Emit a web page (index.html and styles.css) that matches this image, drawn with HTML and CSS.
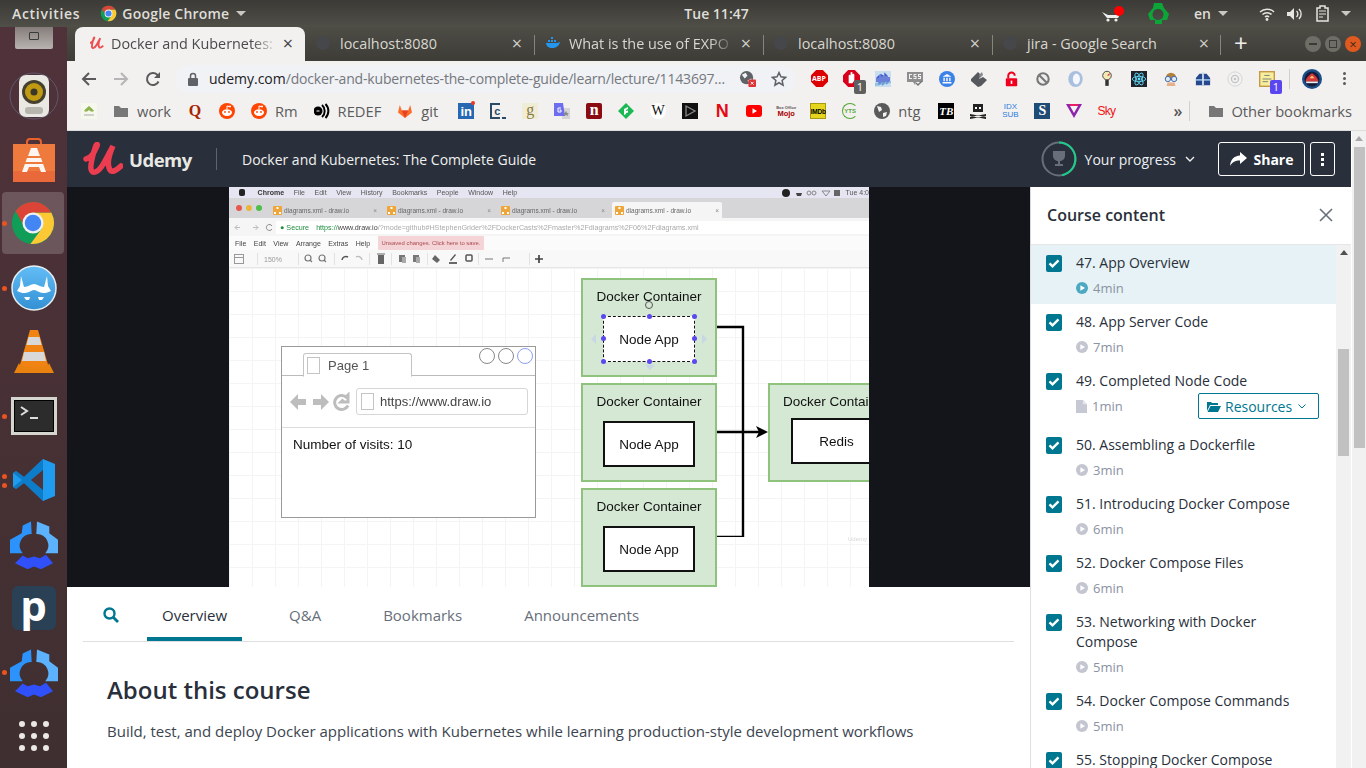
FILE: index.html
```html
<!DOCTYPE html>
<html lang="en">
<head>
    <meta charset="UTF-8">
    <title>Docker and Kubernetes: The Complete Guide | Udemy</title>
    <link rel="stylesheet" href="styles.css">
</head>
<body>
    <svg class="defs" width="0" height="0">
        <symbol id="chromeLogo" viewBox="0 0 48 48">
            <circle cx="24" cy="24" r="22" fill="#0f9d58"/>
            <path d="M43.05 13A22 22 0 0 1 21.3 45.8L33.5 29.5 24 13z" fill="#fcc934"/>
            <path d="M5.9 11.6A22 22 0 0 1 43.05 13H24L15 28z" fill="#db4437"/>
            <circle cx="24" cy="24" r="11" fill="#f1f1f1"/>
            <circle cx="24" cy="24" r="8.6" fill="#4285f4"/>
        </symbol>
        <symbol id="gearLogo" viewBox="0 0 48 48">
            <path d="M21 1l.7 12.500A11.500 11.500 0 0 0 12.700 32.700H0V19.300l11.700-6.600L12.700 5z" fill="#2b93fb"/>
            <path d="M27 1l12.300 5v6.700L48 19.300v13.400H35.300A11.500 11.500 0 0 0 26.300 13.500z" fill="#5cb2fd"/>
            <path d="M5 42.700L12.700 35l5 2.700 6.300-1.700 6 1.700 6-3.400 7 8.400-12 6-7-2.700-6.300 2.700z" fill="#2f50fb"/>
        </symbol>
        <symbol id="reddit" viewBox="0 0 16 16">
            <circle cx="8" cy="8" r="8" fill="#ff4500"/>
            <ellipse cx="8" cy="9.6" rx="5" ry="3.4" fill="#fff"/>
            <circle cx="6" cy="9" r=".9" fill="#ff4500"/>
            <circle cx="10" cy="9" r=".9" fill="#ff4500"/>
            <path d="M8 6V3l2.500.6" stroke="#fff" fill="none"/>
            <circle cx="11" cy="3.6" r="1" fill="#fff"/>
        </symbol>
        <symbol id="folder" viewBox="0 0 16 16">
            <path d="M1 3h5l2 2h7v9H1z" fill="#777"/>
        </symbol>
        <symbol id="check" viewBox="0 0 16 16">
            <path d="M3.500 8.400l3 3 6-6" fill="none" stroke="#fff" stroke-width="2.400"/>
        </symbol>
        <symbol id="playDot" viewBox="0 0 12 12">
            <circle cx="6" cy="6" r="6"/>
            <path d="M4.400 3.200L9 6 4.400 8.800z" fill="#fff"/>
        </symbol>
        <symbol id="fileIcon" viewBox="0 0 12 14">
            <path d="M0 0h7.500L12 4.500V14H0z" fill="#c6c8d4"/>
            <path d="M7.500 0v4.500H12" fill="#e4e5ec"/>
        </symbol>
        <symbol id="drawioIcon" viewBox="0 0 9 9">
            <rect width="9" height="9" rx="1" fill="#eea63a"/>
            <path d="M3.500 1h2v2h-2zM1 6h2v2H1zM6 6h2v2H6z" fill="#fff"/>
        </symbol>
    </svg>

    <header class="topbar">
        <span class="topbar-text activities">Activities</span>
        <svg class="app-logo"><use href="#chromeLogo"/></svg>
        <span class="topbar-text app-name">Google Chrome</span>
        <span class="caret"></span>
        <span class="topbar-text clock">Tue 11:47</span>
        <div class="tray">
            <svg class="tray-cart" width="26" height="18" viewBox="0 0 26 18">
                <path d="M1 7l6 3h9l2-4 2 1-3 6H6z" fill="#eee"/>
                <circle cx="7" cy="15" r="1.600" fill="#eee"/>
                <circle cx="15" cy="15" r="1.600" fill="#eee"/>
                <circle cx="18" cy="6" r="5" fill="#f00"/>
            </svg>
            <svg class="tray-recycle" width="24" height="24" viewBox="0 0 24 24">
                <path d="M8 1h8l2 5 5 6-2 6-5 0v4H9v-4H4l-2-6 5-6zM12 7a5.500 5.500 0 1 0 .01 0z" fill="#0ca537" fill-rule="evenodd"/>
            </svg>
            <span class="topbar-text lang">en</span>
            <span class="caret"></span>
            <svg class="tray-wifi" width="16" height="14" viewBox="0 0 16 14">
                <path d="M1 5a10 10 0 0 1 14 0M3.500 7.500a6.500 6.500 0 0 1 9 0M6 10a3 3 0 0 1 4 0" fill="none" stroke="#e6e5df" stroke-width="1.500"/>
                <circle cx="8" cy="12.500" r="1.400" fill="#e6e5df"/>
            </svg>
            <svg class="tray-vol" width="16" height="14" viewBox="0 0 16 14">
                <path d="M0 5h3l4-4v12l-4-4H0z" fill="#e6e5df"/>
                <path d="M9.500 4a4 4 0 0 1 0 6M12 2a7 7 0 0 1 0 10" fill="none" stroke="#e6e5df" stroke-width="1.400"/>
            </svg>
            <svg class="tray-batt" width="14" height="17" viewBox="0 0 14 17">
                <path d="M4 1h5v2h3v13H1V3h3z" fill="none" stroke="#e6e5df" stroke-width="1.500"/>
                <path d="M3 6h7M3 9h7M3 12h4" stroke="#e6e5df"/>
            </svg>
            <span class="caret"></span>
        </div>
    </header>

    <div class="desk">
        <nav class="dock">
            <div class="dock-item drive-slot">
                <div class="drive"><span></span></div>
            </div>
            <div class="dock-item">
                <svg width="50" height="48" viewBox="0 0 50 48">
                    <ellipse cx="25" cy="24" rx="24" ry="23" fill="none" stroke="#6d7ea0" stroke-width="1" opacity=".5"/>
                    <rect x="10" y="3" width="30" height="42" rx="7" fill="#e9e8e2"/>
                    <circle cx="25" cy="20" r="12" fill="#46402e"/>
                    <circle cx="25" cy="20" r="9" fill="#c29a12"/>
                    <circle cx="25" cy="20" r="3.500" fill="#3a3628"/>
                    <rect x="16" y="35" width="18" height="7" rx="3" fill="#b6b5ae"/>
                </svg>
            </div>
            <div class="dock-item">
                <svg width="44" height="44" viewBox="0 0 44 44">
                    <path d="M15 9V4a3 3 0 0 1 3-3h8a3 3 0 0 1 3 3v5" fill="none" stroke="#e8612c" stroke-width="2"/>
                    <path d="M1 6h42v38H1z" fill="#ef7a3e"/>
                    <path d="M1 33h42v11H1z" fill="#e9693a"/>
                    <path d="M19 10h6l3 8h-12zM15 20h14l5 14h-5l-2-5H17l-2 5h-5z" fill="#fff" opacity=".92"/>
                    <path d="M13 24h18v2H13z" fill="#ef7a3e"/>
                </svg>
            </div>
            <div class="dock-item running active">
                <svg width="46" height="46"><use href="#chromeLogo"/></svg>
            </div>
            <div class="dock-item running">
                <svg width="46" height="46" viewBox="0 0 46 46">
                    <defs><linearGradient id="stacheSky" x1="0" y1="0" x2="0" y2="1"><stop offset="0" stop-color="#63bdf6"/><stop offset="1" stop-color="#3290d4"/></linearGradient></defs>
                    <circle cx="23" cy="23" r="22" fill="url(#stacheSky)" stroke="#e8eef2" stroke-width="1.500"/>
                    <path d="M9 21l1-10 3 11c4 0 7-3 10-3s6 3 10 3l3-11 1 10 3 5c-4 2-8 3-12 1-2-1-3-2-5-2s-3 1-5 2c-4 2-8 1-12-1z" fill="#fff"/>
                    <path d="M13 32h6l-1 3h-3zM27 32h6l-2 3h-3z" fill="#fff"/>
                </svg>
            </div>
            <div class="dock-item">
                <svg width="42" height="46" viewBox="0 0 42 46">
                    <path d="M17 1h8l11 38H6z" fill="#f08312"/>
                    <path d="M15.500 8h11l2 8h-15zM11 23h20l2 9H9z" fill="#d8d8d8"/>
                    <path d="M6 34L1 44h40l-5-10c0 6-30 6-30 0z" fill="#e9820f"/>
                </svg>
            </div>
            <div class="dock-item running">
                <div class="term"><svg width="26" height="16" viewBox="0 0 26 16"><path d="M1 2l6 4-6 4" fill="none" stroke="#ddd" stroke-width="2"/><path d="M10 12h8v2h-8z" fill="#ddd"/></svg></div>
            </div>
            <div class="dock-item running double">
                <svg width="42" height="42" viewBox="0 0 42 42">
                    <path d="M30 0l12 5v32l-12 5L11 24 3 30l-3-2v-14l3-2 8 6z" fill="#1f9cf0"/>
                    <path d="M30 0v42L11 24 3 30 0 28l9-7-9-7 3-2 8 6z" fill="#0065a9" opacity=".55"/>
                    <path d="M30 11L18 21l12 10z" fill="#4e3338"/>
                </svg>
            </div>
            <div class="dock-item"><svg width="48" height="49"><use href="#gearLogo"/></svg></div>
            <div class="dock-item">
                <div class="pbox"><span>p</span></div>
            </div>
            <div class="dock-item running"><svg width="48" height="49"><use href="#gearLogo"/></svg></div>
            <div class="dock-item">
                <div class="apps">
                    <i></i><i></i><i></i><i></i><i></i><i></i><i></i><i></i><i></i>
                </div>
            </div>
        </nav>

        <div class="chrome">
            <div class="tabstrip">
                <div class="tab tab-active">
                    <svg class="tab-icon" viewBox="0 0 40 34"><path d="M3 17C8 16 12 9 14 4 15 1 13 2 12 6 10 13 7 22 8 27 9 33 15 30 19 24 23 18 26 11 30 4 26 13 24 23 27 28 29 31 34 28 38 24" fill="none" stroke="#ec5252" stroke-width="5"/></svg>
                    <span class="tab-title tab-fade">Docker and Kubernetes:</span>
                    <span class="tab-x">&times;</span>
                </div>
                <div class="tab">
                    <span class="tab-dot"></span>
                    <span class="tab-title">localhost:8080</span>
                    <span class="tab-x">&times;</span>
                </div>
                <div class="tab tab-sep">
                    <svg class="tab-icon" viewBox="0 0 16 16"><path d="M1 8h11c1 0 2-1 3-1-1 4-4 6-8 6-3 0-6-2-6-5z" fill="#2496ed"/><path d="M3 5h2v2H3zM6 5h2v2H6zM9 5h2v2H9zM6 2h2v2H6z" fill="#2496ed"/></svg>
                    <span class="tab-title tab-fade">What is the use of EXPO</span>
                    <span class="tab-x">&times;</span>
                </div>
                <div class="tab tab-sep">
                    <span class="tab-dot"></span>
                    <span class="tab-title">localhost:8080</span>
                    <span class="tab-x">&times;</span>
                </div>
                <div class="tab tab-sep tab-last">
                    <span class="tab-dot"></span>
                    <span class="tab-title">jira - Google Search</span>
                    <span class="tab-x">&times;</span>
                </div>
                <span class="new-tab">+</span>
                <div class="win-btns">
                    <span class="win-btn"><i class="win-min"></i></span>
                    <span class="win-btn"><i class="win-max"></i></span>
                    <span class="win-btn win-close">&times;</span>
                </div>
            </div>

            <div class="toolbar">
                <svg class="tool" width="16" height="16" viewBox="0 0 16 16"><path d="M15 8H2M8 2L2 8l6 6" fill="none" stroke="#5a5a5a" stroke-width="2"/></svg>
                <svg class="tool" width="16" height="16" viewBox="0 0 16 16"><path d="M1 8h13M8 2l6 6-6 6" fill="none" stroke="#b5b5b5" stroke-width="2"/></svg>
                <svg class="tool" width="16" height="16" viewBox="0 0 16 16"><path d="M13.500 10.500A6 6 0 1 1 12.200 3.800L14 5.600" fill="none" stroke="#5a5a5a" stroke-width="2"/><path d="M15 1v6H9z" fill="#5a5a5a"/></svg>
                <div class="omnibox">
                    <svg class="lock" width="10" height="14" viewBox="0 0 10 14"><path d="M2.500 6V4a2.500 2.500 0 0 1 5 0v2" fill="none" stroke="#5f6368" stroke-width="1.500"/><rect y="6" width="10" height="8" rx="1" fill="#5f6368"/></svg>
                    <span class="url"><b>udemy.com</b>/docker-and-kubernetes-the-complete-guide/learn/lecture/1143697&hellip;</span>
                    <svg class="omni-globe" width="17" height="17" viewBox="0 0 18 18"><circle cx="8" cy="8" r="7" fill="#5f6368"/><path d="M3 5l4-2 2 3-3 3zM9 11l4-2 1 3-3 2z" fill="#f1f3f4"/><rect x="10" y="10" width="8" height="8" rx="1" fill="#d33"/><path d="M12.500 12.500l3 3m0-3l-3 3" stroke="#fff"/></svg>
                    <svg class="omni-star" width="16" height="16" viewBox="0 0 18 18"><path d="M9 1.800l2.200 4.800 5.200.6-3.900 3.500 1.100 5.200L9 13.200l-4.600 2.700 1.100-5.200-3.900-3.500 5.200-.6z" fill="none" stroke="#5f6368" stroke-width="1.700"/></svg>
                </div>
                <div class="exts">
                    <span class="ext"><svg width="17" height="17" viewBox="0 0 18 18"><path d="M5.500 0h7L18 5.500v7L12.500 18h-7L0 12.500v-7z" fill="#d00"/></svg><em class="abp">ABP</em></span>
                    <span class="ext"><svg width="17" height="17" viewBox="0 0 18 18"><path d="M5.500 0h7L18 5.500v7L12.500 18h-7L0 12.500v-7z" fill="#d8001a"/><path d="M6 14V6a1 1 0 0 1 2 0V3a1 1 0 0 1 2 0v2a1 1 0 0 1 2 0v6l-2 3z" fill="#fff"/></svg><em class="badge grey">1</em></span>
                    <span class="ext"><svg width="16" height="16" viewBox="0 0 16 16"><rect width="16" height="16" fill="#c7dfee"/><path d="M2 11V7l2-2v8l2-1V4l2 1v8l2-2V3l2 2v7l2-2V6" fill="none" stroke="#4458cf" stroke-width="1.400"/><path d="M0 12l16-2v2l-16 3z" fill="#7bb5d8" opacity=".7"/></svg></span>
                    <span class="ext"><svg width="16" height="16" viewBox="0 0 16 16"><path d="M0 1h16v10H9l-1 3-2-3H0z" fill="#8e8e8e"/><path d="M2 3h3v1H3v3h2v1H2zM6.500 3h3v1h-2v1h2v3h-3V7h2V6h-2zM11 3h3v1h-2v1h2v3h-3V7h2V6h-2z" fill="#f2f1f0"/><path d="M9 12l2 2 4-4" fill="none" stroke="#777" stroke-width="1.500"/></svg></span>
                    <span class="ext"><svg width="16" height="16" viewBox="0 0 18 18"><circle cx="9" cy="9" r="9" fill="#3b82e8"/><path d="M9 3.500L4 6.500h10zM5 7.500h1.500v4H5zM8.200 7.500h1.600v4H8.200zM11.500 7.500H13v4h-1.500zM4 12.500h10V14H4z" fill="#fff"/></svg></span>
                    <span class="ext"><svg width="16" height="16" viewBox="0 0 16 16"><path d="M0 8L7 1l3 3-2 4 4-2 4 3-6 6-3 1-7-6z" fill="#55585c"/><path d="M8 4l3-3 1 3-3 3z" fill="#85888c"/></svg></span>
                    <span class="ext"><svg width="13" height="16" viewBox="0 0 16 18"><path d="M4 8V5a4 4 0 0 1 8 0" fill="none" stroke="#f0001e" stroke-width="2.400"/><rect x="1" y="8" width="14" height="10" rx="1" fill="#f0001e"/><rect x="7" y="11" width="2" height="4" fill="#fff"/></svg></span>
                    <span class="ext"><svg width="14" height="14" viewBox="0 0 16 16"><circle cx="8" cy="8" r="6.500" fill="#eee" stroke="#777" stroke-width="2.400"/><path d="M4 4l8 8" stroke="#777" stroke-width="2.400"/></svg></span>
                    <span class="ext"><svg width="17" height="18" viewBox="0 0 18 20"><ellipse cx="9" cy="10" rx="8" ry="9" fill="#a9bfe0"/><ellipse cx="10" cy="10" rx="4" ry="6" fill="#f4f7fb"/></svg></span>
                    <span class="ext"><svg width="12" height="18" viewBox="0 0 14 20"><circle cx="7" cy="6" r="5" fill="#f3e9b5" stroke="#333"/><rect x="5" y="11" width="4" height="7" fill="#333"/><path d="M7 6l3-3v3z" fill="#c33"/></svg></span>
                    <span class="ext"><svg width="16" height="16" viewBox="0 0 18 18"><rect width="18" height="18" fill="#20232a"/><circle cx="9" cy="9" r="1.600" fill="#61dafb"/><g fill="none" stroke="#61dafb"><ellipse cx="9" cy="9" rx="7.500" ry="3"/><ellipse cx="9" cy="9" rx="7.500" ry="3" transform="rotate(60 9 9)"/><ellipse cx="9" cy="9" rx="7.500" ry="3" transform="rotate(120 9 9)"/></g></svg></span>
                    <span class="ext"><svg width="16" height="16" viewBox="0 0 18 18"><path d="M3 8a6 6 0 0 1 12 0v2H3z" fill="#b5803a"/><circle cx="5.500" cy="9" r="3" fill="#dfe9f4" stroke="#2d5fa8"/><circle cx="12.500" cy="9" r="3" fill="#dfe9f4" stroke="#2d5fa8"/><path d="M5 13h8l1 4H4z" fill="#e5b08a"/></svg></span>
                    <span class="ext"><svg width="16" height="16" viewBox="0 0 18 18"><path d="M5 3h8l4 5v8H1V8z" fill="#27488f"/><path d="M1 9h16v2H1z" fill="#8db3d8"/><path d="M8 1h2v15H8z" fill="#cfe0ef"/></svg></span>
                    <span class="ext"><svg width="16" height="16" viewBox="0 0 18 18"><circle cx="9" cy="9" r="8" fill="#f2f2f2" stroke="#d2d2d2"/><circle cx="9" cy="9" r="4" fill="none" stroke="#c4c4c4" stroke-width="1.500"/><circle cx="9" cy="9" r="1.500" fill="#c4c4c4"/></svg></span>
                    <span class="ext"><svg width="16" height="16" viewBox="0 0 18 18"><rect x=".8" y=".8" width="16.400" height="16.400" fill="#f6ee9a" stroke="#c49a4a" stroke-width="1.600"/><path d="M6 5h6M4 9h10M4 12h6" stroke="#777"/></svg><em class="badge violet">1</em></span>
                </div>
                <span class="tool-sep"></span>
                <svg class="avatar" width="20" height="20" viewBox="0 0 24 24"><circle cx="12" cy="12" r="12" fill="#1a4f88"/><circle cx="12" cy="12" r="9" fill="#181c3a"/><path d="M4 15c2-6 4-7 8-10 4 3 6 4 8 10z" fill="#d9383a"/><path d="M9 11l3-3 3 3z" fill="#f4d36c"/><path d="M5 15h14v2H5z" fill="#eee"/></svg>
                <span class="dots"><i></i><i></i><i></i></span>
            </div>

            <div class="bookmarks">
                <span class="bm"><svg class="fav" viewBox="0 0 16 16"><rect width="16" height="16" fill="#f6f8ee"/><path d="M8 3C6 5 4 6 3 8c2 1 3 1 5-1 2 2 3 2 5 1-1-2-3-3-5-5z" fill="#8fb34c"/><path d="M3 12h10" stroke="#a9a9a9"/></svg></span>
                <span class="bm"><svg class="fav"><use href="#folder"/></svg>work</span>
                <span class="bm"><span class="fav fav-q">Q</span></span>
                <span class="bm"><svg class="fav"><use href="#reddit"/></svg></span>
                <span class="bm"><svg class="fav"><use href="#reddit"/></svg>Rm</span>
                <span class="bm"><svg class="fav" viewBox="0 0 16 16"><circle cx="4" cy="8" r="4.500" fill="#000"/><path d="M2.500 8h3" stroke="#fff"/><path d="M8 2a8 8 0 0 1 0 12M11.500 1a10 10 0 0 1 0 14" fill="none" stroke="#000" stroke-width="2"/></svg>REDEF</span>
                <span class="bm bm-git"><svg class="fav" viewBox="0 0 16 16"><path d="M8 15L1 9.500 2.800 2l2 5.500h6.400l2-5.500L15 9.500z" fill="#fc6d26"/><path d="M8 15L4.800 7.500h6.400z" fill="#e24329"/></svg>git</span>
                <span class="bm"><span class="fav fav-in">in<i></i></span></span>
                <span class="bm"><span class="fav fav-c">c<i></i></span></span>
                <span class="bm"><span class="fav fav-g">g</span></span>
                <span class="bm"><svg class="fav" viewBox="0 0 16 16"><path d="M9 5h7v11H8z" fill="#d5d5d5"/><path d="M0 0h9l2 13H0z" fill="#6d6df0"/><path d="M7 5H4v4h3V7H5.500" fill="none" stroke="#fff"/><path d="M12 8l1 2h2l-1.500 1 .5 2-2-1-2 1 .5-2L9 10h2z" fill="#888"/></svg></span>
                <span class="bm"><span class="fav fav-n">n</span></span>
                <span class="bm"><svg class="fav" viewBox="0 0 16 16"><path d="M8 0l8 8-8 8-8-8z" fill="#1bb954"/><path d="M6 12V6l4-2v2L8 7v1l2-.5v2L8 10v1z" fill="#fff"/></svg></span>
                <span class="bm"><span class="fav fav-w">W</span></span>
                <span class="bm"><svg class="fav" viewBox="0 0 16 16"><rect width="16" height="16" fill="#111"/><path d="M4 3l9 5-9 5z" fill="none" stroke="#888" stroke-width="1.300"/></svg></span>
                <span class="bm"><span class="fav fav-nf">N</span></span>
                <span class="bm"><svg class="fav" viewBox="0 0 16 16"><rect y="2" width="16" height="12" rx="3" fill="#f00"/><path d="M6.500 5.200L11 8l-4.500 2.800z" fill="#fff"/></svg></span>
                <span class="bm"><span class="fav fav-mojo"><small>Box Office</small>Mojo</span></span>
                <span class="bm"><span class="fav fav-imdb">IMDb</span></span>
                <span class="bm"><span class="fav fav-yts">YTS</span></span>
                <span class="bm bm-ntg"><svg class="fav" viewBox="0 0 16 16"><circle cx="8" cy="8" r="8" fill="#5a5a5a"/><path d="M3 3l4 1 1 3-3 2zM9 10l4-1-1 4-3 1z" fill="#f3f3f3"/></svg>ntg</span>
                <span class="bm"><span class="fav fav-tb">TB</span></span>
                <span class="bm"><svg class="fav" viewBox="0 0 16 16"><path d="M3 1h10v8H3z" fill="#222"/><path d="M5 4h2v2H5zM9 4h2v2H9z" fill="#fff"/><path d="M0 11l16 3v2L0 13zM16 11L0 14v2l16-3z" fill="#222"/></svg></span>
                <span class="bm"><span class="fav fav-idx">IDX<br>SUB</span></span>
                <span class="bm"><span class="fav fav-s">S</span></span>
                <span class="bm"><svg class="fav" viewBox="0 0 16 16"><path d="M0 1h16L8 15z" fill="#8e24aa"/><path d="M4 3h8L8 10z" fill="#f3f3f3"/><path d="M3 1h10l-1.500 2h-7z" fill="#e91e63"/></svg></span>
                <span class="bm"><span class="fav fav-sky">Sky</span></span>
                <span class="bm-more">&raquo;</span>
                <span class="bm-sep"></span>
                <span class="bm bm-other"><svg class="fav"><use href="#folder"/></svg>Other bookmarks</span>
            </div>

            <div class="page">
                <div class="page-main">
                    <div class="ud-header">
                        <svg class="ud-logo" width="40" height="34" viewBox="0 0 40 34"><path d="M3 17C8 16 12 9 14 4 15 1 13 2 12 6 10 13 7 22 8 27 9 33 15 30 19 24 23 18 26 11 30 4 26 13 24 23 27 28 29 31 34 28 38 24" fill="none" stroke="#ec3c50" stroke-width="5.500" stroke-linecap="round"/></svg>
                        <span class="ud-word">Udemy</span>
                        <span class="ud-divider"></span>
                        <span class="ud-title">Docker and Kubernetes: The Complete Guide</span>
                        <svg class="ud-ring" width="36" height="36" viewBox="0 0 36 36">
                            <circle cx="18" cy="18" r="16.500" fill="none" stroke="#686f7a" stroke-width="2"/>
                            <path d="M18 1.500A16.500 16.500 0 0 1 21 34.200" fill="none" stroke="#1ecb8b" stroke-width="2"/>
                            <path d="M12 10h12v5c0 3-3 5-5 5v3h3v2h-8v-2h3v-3c-2 0-5-2-5-5z" fill="#686f7a"/>
                        </svg>
                        <span class="ud-progress">Your progress</span>
                        <svg class="ud-chev" width="10" height="6" viewBox="0 0 10 6"><path d="M1 1l4 4 4-4" fill="none" stroke="#eee" stroke-width="1.400"/></svg>
                        <button class="ud-share">
                            <svg width="17" height="14" viewBox="0 0 17 14"><path d="M10 0l7 6-7 6V8.500C5 8.500 2.500 10 0 14 .5 8 4 3.800 10 3.500z" fill="#fff"/></svg>
                            Share
                        </button>
                        <button class="ud-kebab"><i></i><i></i><i></i></button>
                    </div>

                    <div class="player">
                        <div class="video">
                            <div class="mac-menu">
                                <span class="apple"></span>
                                <b>Chrome</b><span>File</span><span>Edit</span><span>View</span><span>History</span><span>Bookmarks</span><span>People</span><span>Window</span><span>Help</span>
                                <span class="mac-tray">
                                    <i class="mac-ball"></i>
                                    <svg width="44" height="8" viewBox="0 0 44 8"><path d="M0 4h6l-1 3H1z" fill="#444"/><circle cx="13" cy="4" r="2" fill="none" stroke="#888"/><circle cx="18" cy="4" r="2" fill="none" stroke="#888"/><path d="M26 2h8l-4 5z" fill="none" stroke="#888"/><rect x="38" y="1" width="6" height="6" fill="#666"/></svg>
                                    <span>Tue 4:0</span>
                                </span>
                            </div>
                            <div class="vid-tabs">
                                <i class="light l-red"></i><i class="light l-yellow"></i><i class="light l-green"></i>
                                <span class="vid-tab"><svg class="drawio"><use href="#drawioIcon"/></svg>diagrams.xml - draw.io<em>&times;</em></span>
                                <span class="vid-tab"><svg class="drawio"><use href="#drawioIcon"/></svg>diagrams.xml - draw.io<em>&times;</em></span>
                                <span class="vid-tab"><svg class="drawio"><use href="#drawioIcon"/></svg>diagrams.xml - draw.io<em>&times;</em></span>
                                <span class="vid-tab vid-tab-on"><svg class="drawio"><use href="#drawioIcon"/></svg>diagrams.xml - draw.io<em>&times;</em></span>
                            </div>
                            <div class="vid-addr">
                                <svg width="40" height="9" viewBox="0 0 40 9"><path d="M6 4.500H1M3.500 2L1 4.500 3.500 7M19 4.500h5M21.500 2L24 4.500 21.500 7" fill="none" stroke="#bbb"/><path d="M38 6a3 3 0 1 1 0-3" fill="none" stroke="#888"/></svg>
                                <span class="vid-url"><em>&#9679; Secure</em><u>https://</u><b>www.draw.io</b>/?mode=github#HStephenGrider%2FDockerCasts%2Fmaster%2Fdiagrams%2F06%2Fdiagrams.xml</span>
                            </div>
                            <div class="vid-menu">
                                <span>File</span><span>Edit</span><span>View</span><span>Arrange</span><span>Extras</span><span>Help</span>
                                <span class="unsaved">Unsaved changes. Click here to save.</span>
                            </div>
                            <svg class="vid-tools" width="640" height="18" viewBox="0 0 640 18">
                                <path d="M0 17.500h640" stroke="#e6e6e6"/>
                                <path d="M28.500 3v12M69.500 3v12M105.500 3v12M140.500 3v12M162.500 3v12M198.500 3v12M249.500 3v12M300.500 3v12" stroke="#e2e2e2"/>
                                <rect x="5.500" y="4.500" width="9" height="9" fill="none" stroke="#999"/><path d="M5 7.500h9" stroke="#999"/>
                                <text x="35" y="12" font-size="7" fill="#999">150%</text>
                                <g fill="none" stroke="#777" stroke-width="1.200"><circle cx="79" cy="8" r="3"/><circle cx="93" cy="8" r="3"/><path d="M81 10l2 2M95 10l2 2"/></g>
                                <path d="M113 10a4 4 0 0 1 6-3" fill="none" stroke="#555" stroke-width="1.500"/>
                                <path d="M133 10a4 4 0 0 0-6-3" fill="none" stroke="#bbb" stroke-width="1.400"/>
                                <rect x="149" y="5" width="6" height="9" fill="#666"/><path d="M148 4h8" stroke="#666"/>
                                <rect x="170" y="5" width="6" height="7" fill="#777"/><rect x="184" y="5" width="6" height="7" fill="#777"/><rect x="173" y="7" width="4" height="6" fill="#aaa"/><rect x="187" y="7" width="4" height="6" fill="#aaa"/>
                                <path d="M206 5l5 5-3 3-5-4z" fill="#666"/><path d="M220 13h8" stroke="#444" stroke-width="1.600"/><path d="M221 10l5-6 1 1-5 6z" fill="#555"/>
                                <rect x="237" y="5" width="6" height="6" rx="1" fill="none" stroke="#555" stroke-width="1.500"/>
                                <path d="M256 9h8M274 12V8h7" fill="none" stroke="#777"/>
                                <path d="M310 5v8M306 9h8" stroke="#444" stroke-width="1.700"/>
                            </svg>
                            <div class="canvas">
                                <div class="mock">
                                    <div class="mock-top">
                                        <span class="mock-tab"><i class="mock-file"></i>Page 1</span>
                                        <span class="mock-rings"><i></i><i></i><i class="ring-blue"></i></span>
                                    </div>
                                    <div class="mock-nav">
                                        <svg width="62" height="20" viewBox="0 0 62 20">
                                            <path d="M0 10l8-8v5h8v6H8v5zM39 10l-8-8v5h-8v6h8v5z" fill="#bdbdbd"/>
                                            <path d="M58 13.500A7 7 0 1 1 56 5l2-2v7h-7l2.500-2.500" fill="none" stroke="#bdbdbd" stroke-width="3"/>
                                        </svg>
                                        <span class="mock-addr"><i class="mock-file"></i>https://www.draw.io</span>
                                    </div>
                                    <div class="mock-body">Number of visits: 10</div>
                                </div>

                                <div class="box box-a">
                                    <span>Docker Container</span>
                                    <div class="node node-sel">Node App
                                        <i class="h h1"></i><i class="h h2"></i><i class="h h3"></i><i class="h h4"></i><i class="h h5"></i><i class="h h6"></i><i class="h h7"></i><i class="h h8"></i>
                                    </div>
                                    <i class="rotate"></i>
                                    <i class="hint hint-l"></i><i class="hint hint-r"></i><i class="hint hint-d"></i>
                                </div>
                                <div class="box box-b"><span>Docker Container</span><div class="node">Node App</div></div>
                                <div class="box box-c"><span>Docker Container</span><div class="node">Node App</div></div>
                                <div class="box box-d"><span>Docker Contai</span><div class="node node-redis">Redis</div></div>

                                <svg class="wires" width="60" height="220" viewBox="0 0 60 220">
                                    <path d="M0 10h26v210H0M0 115h43" fill="none" stroke="#000" stroke-width="2.400"/>
                                    <path d="M39 109l12 6-12 6 3-6z" fill="#000"/>
                                </svg>
                                <span class="watermark">Udemy</span>
                            </div>
                        </div>
                    </div>

                    <div class="tabs-row">
                        <svg class="search" width="16" height="16" viewBox="0 0 16 16"><circle cx="6.500" cy="6.500" r="5" fill="none" stroke="#007791" stroke-width="2.400"/><path d="M10 10l5 5" stroke="#007791" stroke-width="2.800"/></svg>
                        <a class="ltab ltab-on">Overview</a>
                        <a class="ltab">Q&amp;A</a>
                        <a class="ltab">Bookmarks</a>
                        <a class="ltab">Announcements</a>
                    </div>
                    <div class="about">
                        <h2>About this course</h2>
                        <p>Build, test, and deploy Docker applications with Kubernetes while learning production-style development workflows</p>
                    </div>
                </div>

                <aside class="sidebar">
                    <div class="side-head">
                        <span>Course content</span>
                        <svg width="14" height="14" viewBox="0 0 14 14"><path d="M1 1l12 12M13 1L1 13" stroke="#686f7a" stroke-width="1.600"/></svg>
                    </div>
                    <div class="side-body">
                        <ul class="lectures">
                            <li class="lec lec-on">
                                <span class="cb"><svg width="16" height="16"><use href="#check"/></svg></span>
                                <div class="lec-text"><span>47. App Overview</span>
                                    <div class="lec-meta"><svg class="m-ic play-on"><use href="#playDot"/></svg>4min</div></div>
                            </li>
                            <li class="lec">
                                <span class="cb"><svg width="16" height="16"><use href="#check"/></svg></span>
                                <div class="lec-text"><span>48. App Server Code</span>
                                    <div class="lec-meta"><svg class="m-ic"><use href="#playDot"/></svg>7min</div></div>
                            </li>
                            <li class="lec lec-res">
                                <span class="cb"><svg width="16" height="16"><use href="#check"/></svg></span>
                                <div class="lec-text"><span>49. Completed Node Code</span>
                                    <div class="lec-meta"><svg class="m-ic m-file"><use href="#fileIcon"/></svg>1min
                                        <button class="res-btn">
                                            <svg width="14" height="11" viewBox="0 0 14 11"><path d="M0 1h4l1 1h6v2H3L0 10zM3.500 5H14l-3 6H.5z" fill="#007791"/></svg>
                                            Resources
                                            <svg class="res-chev" width="8" height="5" viewBox="0 0 8 5"><path d="M.5.5L4 4 7.500.5" fill="none" stroke="#007791"/></svg>
                                        </button>
                                    </div></div>
                            </li>
                            <li class="lec">
                                <span class="cb"><svg width="16" height="16"><use href="#check"/></svg></span>
                                <div class="lec-text"><span>50. Assembling a Dockerfile</span>
                                    <div class="lec-meta"><svg class="m-ic"><use href="#playDot"/></svg>3min</div></div>
                            </li>
                            <li class="lec">
                                <span class="cb"><svg width="16" height="16"><use href="#check"/></svg></span>
                                <div class="lec-text"><span>51. Introducing Docker Compose</span>
                                    <div class="lec-meta"><svg class="m-ic"><use href="#playDot"/></svg>6min</div></div>
                            </li>
                            <li class="lec">
                                <span class="cb"><svg width="16" height="16"><use href="#check"/></svg></span>
                                <div class="lec-text"><span>52. Docker Compose Files</span>
                                    <div class="lec-meta"><svg class="m-ic"><use href="#playDot"/></svg>6min</div></div>
                            </li>
                            <li class="lec">
                                <span class="cb"><svg width="16" height="16"><use href="#check"/></svg></span>
                                <div class="lec-text"><span>53. Networking with Docker Compose</span>
                                    <div class="lec-meta"><svg class="m-ic"><use href="#playDot"/></svg>5min</div></div>
                            </li>
                            <li class="lec">
                                <span class="cb"><svg width="16" height="16"><use href="#check"/></svg></span>
                                <div class="lec-text"><span>54. Docker Compose Commands</span>
                                    <div class="lec-meta"><svg class="m-ic"><use href="#playDot"/></svg>5min</div></div>
                            </li>
                            <li class="lec">
                                <span class="cb"><svg width="16" height="16"><use href="#check"/></svg></span>
                                <div class="lec-text"><span>55. Stopping Docker Compose</span></div>
                            </li>
                        </ul>
                        <div class="scroll scroll-inner"><i class="arrow"></i><i class="thumb"></i></div>
                    </div>
                </aside>
                <div class="scroll scroll-outer"><i class="arrow"></i><i class="thumb"></i></div>
            </div>
        </div>
    </div>
</body>
</html>
```

FILE: styles.css
```css
* { box-sizing: border-box; }
html, body { margin: 0; padding: 0; height: 768px; overflow: hidden; }
body { font-family: "Open Sans", "Noto Sans", sans-serif; background: #fff; color: #29303b; }
.defs { position: absolute; }
svg { display: block; flex: none; }
button { font-family: inherit; }

/* gnome top bar */
.topbar { height: 27px; display: flex; align-items: center; padding: 0 12px; background: linear-gradient(#3b3a36, #4f4e47); }
.topbar-text { color: #dfded8; font-size: 14px; font-weight: 600; white-space: nowrap; }
.activities { margin-right: 20px; letter-spacing: .7px; }
.app-logo { width: 17px; height: 17px; margin-right: 5px; }
.app-name { letter-spacing: .2px; }
.caret { width: 0; height: 0; border: 5px solid transparent; border-top-color: #c9c8c2; border-bottom: 0; margin-left: 7px; }
.clock { margin-left: 438px; }
.tray { display: flex; align-items: center; margin-left: auto; padding-right: 3px; }
.tray-cart { margin-right: 19px; }
.tray-recycle { margin-right: 24px; }
.tray-wifi { margin-left: 31px; margin-right: 12px; }
.tray-vol { margin-right: 13px; }
.tray-batt { margin-right: 4px; }

/* dock */
.desk { display: flex; height: 741px; }
.dock { width: 67px; flex: none; background: linear-gradient(#50323a, #3f2f30); display: flex; flex-direction: column; overflow: hidden; }
.dock-item { height: 64px; flex: none; display: flex; align-items: center; justify-content: center; position: relative; }
.drive-slot { height: 41px; align-items: flex-end; padding-bottom: 15px; margin-top: -4px; }
.drive { width: 38px; height: 26px; background: linear-gradient(#7c7371, #b8b3b0); border-radius: 0 0 2px 2px; display: flex; align-items: center; justify-content: center; }
.drive span { width: 10px; height: 8px; border: 1px solid #3a3a3a; border-radius: 1px; }
.active { width: 62px; margin: 0 0 2px 2px; border-radius: 4px; background: rgba(255, 255, 255, .18); height: 62px; }
.running::before { content: ""; position: absolute; left: 2px; top: 50%; width: 5px; height: 5px; margin-top: -2px; border-radius: 50%; background: #e95420; }
.active::before { left: 0; }
.double::after { content: ""; position: absolute; left: 2px; top: 50%; width: 5px; height: 5px; margin-top: 3px; border-radius: 50%; background: #e95420; }
.double::before { margin-top: -6px; }
.term { width: 46px; height: 38px; background: #2c2c2c; border: 3px solid #d5d5d0; padding: 5px 6px; box-shadow: inset 0 0 0 1px #000; }
.pbox { width: 44px; height: 44px; border-radius: 6px; background: #2a4054; display: flex; align-items: center; justify-content: center; }
.pbox span { color: #fff; font: 700 42px/44px "Open Sans", sans-serif; margin-top: -7px; }
.apps { display: grid; grid-template-columns: repeat(3, 6px); gap: 6px; }
.apps i { width: 6px; height: 6px; border-radius: 50%; background: #ebe8e6; }

/* chrome tabs */
.chrome { flex: 1; min-width: 0; display: flex; flex-direction: column; }
.tabstrip { height: 34px; background: linear-gradient(#4d4c45, #3d3c37); display: flex; padding-left: 8px; align-items: stretch; }
.tab { width: 229px; flex: none; display: flex; align-items: center; padding: 0 12px 2px 11px; color: #d8d7d0; font-size: 14.400px; position: relative; white-space: nowrap; }
.tab-active { width: 230px; padding-left: 14px; background: #f2f1f0; color: #4a4a4a; border-radius: 8px 8px 0 0; }
.tab-sep::before { content: ""; position: absolute; left: 0; top: 8px; height: 20px; border-left: 1px solid #85847d; }
.tab-last::after { content: ""; position: absolute; right: 0; top: 8px; height: 20px; border-left: 1px solid #85847d; }
.tab-icon { width: 16px; height: 16px; margin-right: 8px; }
.tab-active .tab-icon { width: 15px; margin-right: 7px; }
.tab-dot { width: 14px; height: 14px; margin-right: 10px; border-radius: 50%; background: #46474a; flex: none; }
.tab-title { flex: 1; min-width: 0; }
.tab-fade { -webkit-mask-image: linear-gradient(90deg, #000 85%, transparent); mask-image: linear-gradient(90deg, #000 85%, transparent); }
.tab-x { font-size: 18px; line-height: 1; color: #cfcec8; margin-left: 6px; }
.tab-active .tab-x { color: #444; }
.new-tab { color: #eee; font-size: 24px; line-height: 32px; margin-left: 13px; }
.win-btns { margin-left: auto; display: flex; gap: 4px; align-items: center; padding-right: 5px; }
.win-btn { width: 16px; height: 16px; border-radius: 50%; background: #6e6d66; display: flex; align-items: center; justify-content: center; color: #3a2a20; font-size: 13px; line-height: 1; }
.win-close { background: #e0591f; }
.win-min { width: 8px; height: 2px; background: #3a3a36; }
.win-max { width: 8px; height: 8px; border: 1px solid #3a3a36; }

/* chrome toolbar */
.toolbar { height: 34px; background: #f2f1f0; display: flex; align-items: center; padding: 1px 0 0 14px; }
.tool { margin-right: 16px; }
.omnibox { width: 620px; height: 28px; margin-left: -2px; border-radius: 14px; background: #f0f2f6; display: flex; align-items: center; padding-left: 13px; font-size: 14px; }
.lock { margin-right: 11px; }
.url { flex: 1; min-width: 0; color: #75787c; white-space: nowrap; overflow: hidden; letter-spacing: -.18px; }
.url b { font-weight: 400; color: #202124; letter-spacing: 0; }
.omni-globe { margin-left: 8px; }
.omni-star { margin: 0 8px 0 15px; }
.exts { display: flex; margin-left: 8px; }
.ext { width: 32px; height: 24px; display: flex; align-items: center; justify-content: center; position: relative; }
.ext em { position: absolute; font-style: normal; }
.abp { color: #fff; font-size: 7px; font-weight: 700; }
.badge { right: 1px; bottom: -3px; min-width: 12px; height: 14px; color: #fff; font-size: 11px; line-height: 14px; text-align: center; border-radius: 2px; }
.grey { background: #5f5f5f; }
.violet { background: #5a46f0; }
.tool-sep { width: 1px; height: 20px; background: #d0d0d0; margin-left: 6px; }
.avatar { margin-left: 12px; }
.dots { display: flex; flex-direction: column; gap: 2px; margin-left: 21px; }
.dots i { width: 3px; height: 3px; background: #5a5a5a; border-radius: 50%; }

/* bookmarks */
.bookmarks { height: 36px; background: #f2f1f0; border-bottom: 1px solid #dcdcdc; display: flex; align-items: center; padding: 0 6px 3px; font-size: 14.700px; color: #5b5b5b; white-space: nowrap; }
.bm { display: flex; align-items: center; gap: 8px; padding: 0 8px; }
.bm-git { padding-right: 12px; }
.bm-ntg { padding-right: 10px; }
.fav { width: 16px; height: 16px; flex: none; display: flex; align-items: center; justify-content: center; text-align: center; font-family: "Liberation Sans", sans-serif; position: relative; }
.fav-q { color: #a82400; font: 700 16px "Liberation Serif", serif; }
.fav-in { background: #2867b2; color: #fff; font-weight: 700; font-size: 13px; }
.fav-in i { position: absolute; right: -1px; top: -2px; width: 4px; height: 4px; border-radius: 50%; background: #f0332a; }
.fav-c { justify-content: flex-start; border-left: 2px solid #2b4a66; padding-left: 2px; color: #2b4a66; font-size: 11px; font-weight: 700; box-shadow: inset -6px 0 0 #f2f1f0, inset 0 2px 0 #2b4a66, inset 0 -2px 0 #2b4a66; }
.fav-c i { position: absolute; right: 0; bottom: 0; width: 4px; height: 2px; background: #2b4a66; }
.fav-g { background: #f0edd6; color: #8d7a3c; font: 400 16px/16px "Liberation Serif", serif; padding-bottom: 2px; }
.fav-n { background: #8a0c12; color: #fff; border-radius: 2px; font: 700 16px/16px "Liberation Serif", serif; padding-bottom: 2px; }
.fav-w { background: #fff; color: #111; border-radius: 50%; font: 400 14px "Liberation Serif", serif; }
.fav-nf { color: #e50914; font: 700 18px/16px "Liberation Sans", sans-serif; }
.fav-mojo { flex-direction: column; color: #a00; background: #f6efef; font-size: 7.500px; font-weight: 700; line-height: 8px; }
.fav-mojo small { font-size: 4px; line-height: 5px; white-space: nowrap; color: #555; }
.fav-imdb { background: #e6d51e; color: #000; font-size: 6.500px; font-weight: 700; letter-spacing: -.2px; box-shadow: inset 0 0 0 1px #a69a10; }
.fav-yts { color: #55a632; border: 1px solid #a9d492; border-color: #55a632 transparent #55a632 #55a632; border-radius: 50%; font-size: 6px; font-weight: 700; }
.fav-tb { background: #000; color: #fff; font: italic 700 11px "Liberation Serif", serif; }
.fav-idx { color: #2b7de0; font-size: 8px; line-height: 8px; }
.fav-s { background: #1f4b74; color: #fff; font: 700 14px "Liberation Serif", serif; }
.fav-sky { color: #f01010; font-size: 12px; font-weight: 400; letter-spacing: -.8px; }
.bm-more { margin-left: auto; font-size: 16px; color: #555; font-weight: 600; margin-right: 7px; }
.bm-sep { width: 1px; height: 20px; background: #d0d0d0; margin-right: 10px; }
.bm-other { padding: 0 8px; gap: 7px; }

/* page */
.page { flex: 1; min-height: 0; display: flex; overflow: hidden; background: #fff; }
.page-main { flex: 1; min-width: 0; display: flex; flex-direction: column; }
.ud-header { height: 56px; flex: none; background: #29303b; display: flex; align-items: center; padding: 0 16px; margin-right: -321px; position: relative; z-index: 2; color: #eee; }
.ud-logo { margin-right: 6px; }
.ud-word { font-size: 18.500px; font-weight: 700; letter-spacing: -.5px; color: #e8e8e4; width: 62px; }
.ud-divider { width: 1px; height: 22px; background: #5c6470; margin: 0 25px 0 25px; }
.ud-title { font-size: 14px; color: #f0f0f0; flex: 1; }
.ud-ring { margin-right: 8px; }
.ud-progress { font-size: 14px; color: #eceff1; margin-right: 9px; }
.ud-chev { margin-right: 23px; }
.ud-share { width: 87px; height: 34px; background: none; border: 1px solid #fff; border-radius: 3px; color: #fff; font-size: 14px; font-weight: 700; display: flex; align-items: center; justify-content: center; gap: 7px; padding: 0; margin-right: 5px; }
.ud-kebab { width: 25px; height: 34px; background: none; border: 1px solid #fff; border-radius: 3px; display: flex; flex-direction: column; align-items: center; justify-content: center; gap: 2px; padding: 0; }
.ud-kebab i { width: 3px; height: 3px; background: #fff; }

.player { height: 400px; flex: none; background: #14151a; display: flex; justify-content: center; padding-left: 1px; }
.video { width: 640px; height: 400px; background: #fff; display: flex; flex-direction: column; overflow: hidden; font-family: "Liberation Sans", sans-serif; filter: blur(.35px); }
.mac-menu { height: 11px; flex: none; background: #e6e6f2; font-size: 7px; line-height: 11px; color: #555; display: flex; padding: 0 10px; gap: 9.600px; white-space: nowrap; }
.apple { width: 6px; height: 7px; margin: 2px 2px 0 0; background: #222; border-radius: 2px; }
.mac-menu b { color: #333; margin-left: 1px; }
.mac-tray { margin-left: auto; margin-right: -10px; display: flex; gap: 6px; align-items: center; }
.mac-ball { width: 8px; height: 8px; background: #222; border-radius: 50%; }
.vid-tabs { height: 20px; flex: none; background: #d6d6d8; display: flex; align-items: center; padding-left: 7px; gap: 4px; font-size: 6.500px; color: #666; }
.light { width: 6px; height: 6px; border-radius: 50%; flex: none; }
.l-red { background: #e6584f; }
.l-yellow { background: #e9b63c; }
.l-green { background: #4fbe4b; margin-right: 4px; }
.vid-tab { width: 110px; height: 16px; margin-top: 4px; display: flex; align-items: center; gap: 2px; padding: 0 3px; white-space: nowrap; }
.vid-tab em { margin-left: auto; font-style: normal; color: #888; }
.vid-tab-on { background: #f5f5f5; border-radius: 2px 2px 0 0; }
.drawio { width: 9px; height: 9px; }
.vid-addr { height: 18px; flex: none; background: #f5f5f5; display: flex; align-items: center; padding-left: 5px; font-size: 7.200px; color: #999; }
.vid-url { flex: 1; background: #fff; height: 13px; line-height: 13px; margin-left: 2px; padding-left: 4px; white-space: nowrap; overflow: hidden; color: #aaa; }
.vid-url em { font-style: normal; color: #1e8e3e; margin-right: 7px; }
.vid-url u { color: #1e8e3e; text-decoration: none; }
.vid-url b { color: #444; font-weight: 400; }
.vid-menu { height: 14px; flex: none; background: #fbfbfb; display: flex; align-items: center; padding-left: 6px; gap: 7.500px; font-size: 7px; color: #444; }
.unsaved { background: #f4d4d6; color: #a94a50; border-radius: 1px; height: 14px; line-height: 14px; font-size: 5.900px; padding: 0 4px; }
.vid-tools { background: #f8f8f8; font-family: "Liberation Sans", sans-serif; }

/* diagram in the video: items sit on a free canvas */
.canvas { flex: 1; position: relative; background-color: #fff; background-image: linear-gradient(#f4f4f6 1px, transparent 1px), linear-gradient(90deg, #f4f4f6 1px, transparent 1px); background-size: 23px 23px; color: #111; font-size: 13.500px; overflow: hidden; }
.mock { position: absolute; left: 52px; top: 78px; width: 255px; height: 172px; border: 1.500px solid #9a9a9a; background: #fff; display: flex; flex-direction: column; }
.mock-top { height: 29px; flex: none; border-bottom: 1px solid #bbb; position: relative; }
.mock-tab { position: absolute; left: 21px; top: 6px; width: 109px; height: 24px; border: 1px solid #c4c4c4; border-bottom-color: #fff; border-radius: 3px 3px 0 0; background: #fff; display: flex; align-items: center; gap: 8px; padding-left: 3px; color: #555; font-size: 13px; }
.mock-file { width: 13px; height: 17px; border: 1px solid #c4c4c4; flex: none; }
.mock-rings { position: absolute; right: 2px; top: 1px; display: flex; gap: 3px; }
.mock-rings i { width: 16px; height: 16px; border: 1.200px solid #888; border-radius: 50%; }
.mock-rings .ring-blue { border-color: #8f9ff5; }
.mock-nav { height: 52px; flex: none; border-bottom: 1px solid #ddd; display: flex; align-items: center; padding-left: 8px; gap: 4px; }
.mock-addr { width: 172px; height: 27px; border: 1px solid #d6d6d6; border-radius: 3px; display: flex; align-items: center; gap: 6px; padding-left: 4px; color: #444; font-size: 13px; }
.mock-body { padding: 9px 11px; font-size: 13.500px; }

.box { position: absolute; left: 352px; width: 136px; height: 99px; background: #d5e8d4; border: 2px solid #8fc27c; text-align: center; padding-top: 9px; white-space: nowrap; }
.box > span { display: block; line-height: 16px; }
.box-a { top: 10px; }
.box-b { top: 115px; }
.box-c { top: 220px; }
.box-d { top: 115px; left: 539px; width: 120px; text-align: left; padding-left: 13px; }
.node { position: absolute; left: 20px; top: 36px; width: 92px; height: 46px; background: #fff; border: 2px solid #111; display: flex; align-items: center; justify-content: center; }
.node-sel { border-style: dashed; border-width: 1.500px; }
.node-redis { left: 21px; top: 33px; width: 120px; padding-right: 29px; }
.h { position: absolute; width: 5px; height: 5px; border-radius: 50%; background: #5a48f0; }
.h1 { left: -3px; top: -3px; }
.h2 { left: 43px; top: -3px; }
.h3 { right: -3px; top: -3px; }
.h4 { left: -3px; top: 19px; }
.h5 { right: -3px; top: 19px; }
.h6 { left: -3px; bottom: -3px; }
.h7 { left: 43px; bottom: -3px; }
.h8 { right: -3px; bottom: -3px; }
.rotate { position: absolute; left: 62px; top: 21px; width: 8px; height: 8px; border: 1px solid #555; border-radius: 50%; }
.hint { position: absolute; width: 0; height: 0; border: 5px solid transparent; }
.hint-l { left: 8px; top: 54px; border-right-color: #c9d6e6; border-left: 0; }
.hint-r { right: 8px; top: 54px; border-left-color: #c9d6e6; border-right: 0; }
.hint-d { left: 62px; bottom: 5px; border-top-color: #c9d6e6; border-bottom: 0; }
.wires { position: absolute; left: 488px; top: 49px; }
.watermark { position: absolute; right: 2px; top: 268px; font-size: 6px; color: #d8d8d8; }

/* tabs under the player */
.tabs-row { height: 55px; flex: none; margin: 0 16px; border-bottom: 1px solid #dedfe0; display: flex; align-items: stretch; font-size: 15px; color: #686f7a; }
.search { margin: 20px 28px 0 20px; }
.ltab { padding: 18px 15px 0; margin-right: 32px; }
.ltab-on { color: #29303b; border-bottom: 4px solid #007791; }
.about { padding: 30px 40px 0; }
.about h2 { margin: 0; font-size: 24px; line-height: 36px; font-weight: 600; color: #29303b; }
.about p { margin: 12px 0 0; font-size: 15px; line-height: 22px; color: #3c4550; white-space: nowrap; }

/* course content sidebar */
.sidebar { width: 321px; flex: none; margin-top: 56px; border-left: 1px solid #dedfe0; display: flex; flex-direction: column; min-height: 0; background: #fff; }
.side-head { height: 58px; flex: none; display: flex; align-items: center; justify-content: space-between; padding: 0 18px 1px 16px; border-bottom: 1px solid #e6e6e6; box-shadow: 0 1px 2px rgba(0, 0, 0, .08); font-size: 16px; font-weight: 600; color: #29303b; }
.side-body { flex: 1; min-height: 0; display: flex; }
.lectures { list-style: none; margin: 0; padding: 0; flex: 1; min-width: 0; overflow: hidden; }
.lec { display: flex; padding: 8px 17px 0 15px; min-height: 59px; font-size: 14px; line-height: 20px; color: #29303b; }
.lec-on { background: #e6f2f5; }
.lec-res { height: 64px; }
.cb { width: 16px; height: 17px; flex: none; margin-top: 2px; background: #007791; border-radius: 2px; margin-right: 14px; }
.lec-text { flex: 1; min-width: 0; padding-bottom: 6px; }
.lec-meta { display: flex; align-items: center; margin-top: 5px; color: #8a92a3; font-size: 13px; line-height: 20px; position: relative; }
.m-ic { width: 12px; height: 12px; margin-right: 5px; fill: #c3c5d0; }
.play-on { fill: #4fa8c2; }
.m-file { width: 11px; height: 13px; }
.res-btn { position: absolute; right: 0; top: -3px; width: 121px; height: 26px; background: #fff; border: 1px solid #007791; border-radius: 2px; color: #007791; font-size: 14px; display: flex; align-items: center; gap: 4px; padding: 0 0 0 8px; }
.res-chev { margin-left: 2px; }

.scroll { width: 15px; flex: none; background: #f1f1f1; display: flex; flex-direction: column; align-items: center; position: relative; }
.arrow { width: 0; height: 0; border: 4px solid transparent; border-bottom: 5px solid #505050; border-top: 0; margin-top: 5px; }
.thumb { width: 11px; background: #c1c1c1; }
.scroll-inner .thumb { height: 107px; margin-top: 94px; }
.scroll-outer { width: 15px; border-left: 1px solid #fff; }
.scroll-outer .arrow { border-bottom-color: #a8a8a8; }
.scroll-outer .thumb { height: 301px; margin-top: 6px; }
```
